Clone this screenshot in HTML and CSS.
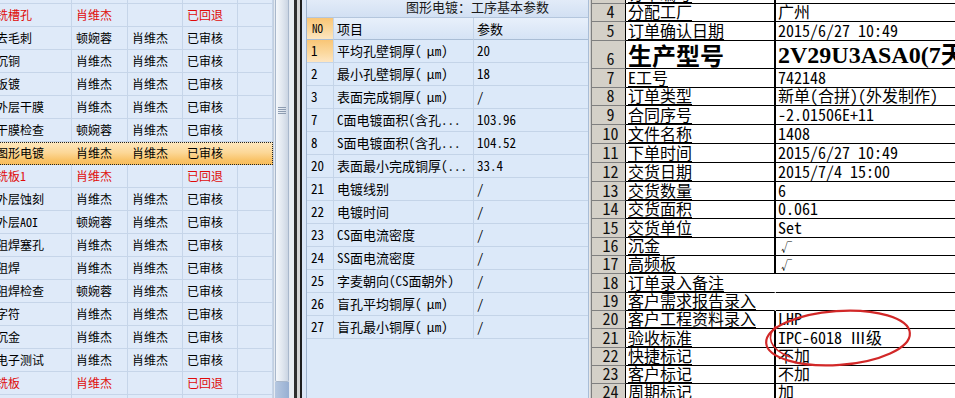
FILE: index.html
```html
<!DOCTYPE html>
<html lang="zh-CN">
<head>
<meta charset="utf-8">
<title>图形电镀</title>
<link rel="stylesheet" href="styles.css">
</head>
<body>
<div class="screen">
  <div class="left">
    <div class="grid-clip">
      <div class="grid">
        <div class="row"><span></span><span></span><span></span><span></span><span></span></div>
        <div class="row red"><span>铣槽孔</span><span>肖维杰</span><span></span><span>已回退</span><span></span></div>
        <div class="row"><span>去毛刺</span><span>顿婉蓉</span><span>肖维杰</span><span>已审核</span><span></span></div>
        <div class="row"><span>沉铜</span><span>肖维杰</span><span>肖维杰</span><span>已审核</span><span></span></div>
        <div class="row"><span>板镀</span><span>肖维杰</span><span>肖维杰</span><span>已审核</span><span></span></div>
        <div class="row"><span>外层干膜</span><span>肖维杰</span><span>肖维杰</span><span>已审核</span><span></span></div>
        <div class="row"><span>干膜检查</span><span>顿婉蓉</span><span>肖维杰</span><span>已审核</span><span></span></div>
        <div class="row sel"><span>图形电镀</span><span>肖维杰</span><span>肖维杰</span><span>已审核</span><span></span></div>
        <div class="row red"><span>铣板1</span><span>肖维杰</span><span></span><span>已回退</span><span></span></div>
        <div class="row"><span>外层蚀刻</span><span>肖维杰</span><span>肖维杰</span><span>已审核</span><span></span></div>
        <div class="row"><span>外层AOI</span><span>顿婉蓉</span><span>肖维杰</span><span>已审核</span><span></span></div>
        <div class="row"><span>阻焊塞孔</span><span>肖维杰</span><span>肖维杰</span><span>已审核</span><span></span></div>
        <div class="row"><span>阻焊</span><span>肖维杰</span><span>肖维杰</span><span>已审核</span><span></span></div>
        <div class="row"><span>阻焊检查</span><span>顿婉蓉</span><span>肖维杰</span><span>已审核</span><span></span></div>
        <div class="row"><span>字符</span><span>肖维杰</span><span>肖维杰</span><span>已审核</span><span></span></div>
        <div class="row"><span>沉金</span><span>肖维杰</span><span>肖维杰</span><span>已审核</span><span></span></div>
        <div class="row"><span>电子测试</span><span>肖维杰</span><span>肖维杰</span><span>已审核</span><span></span></div>
        <div class="row red"><span>铣板</span><span>肖维杰</span><span></span><span>已回退</span><span></span></div>
        <div class="row"><span></span><span></span><span></span><span></span><span></span></div>
      </div>
    </div>
    <div class="vscroll">
      <div class="thumb"><span class="grip"></span></div>
      <div class="track-end"></div>
    </div>
  </div>

  <div class="splitter"><i class="s1"></i><i class="s2"></i><i class="s3"></i><i class="s4"></i><i class="s5"></i></div>

  <div class="mid">
    <div class="title">图形电镀：工序基本参数</div>
    <div class="prow head"><span class="no hl">NO</span><span>项目</span><span>参数</span></div>
    <div class="prow"><span class="no hl">1</span><span>平均孔壁铜厚(<i class="mu">μ</i>m)</span><span>20</span></div>
    <div class="prow"><span class="no">2</span><span>最小孔壁铜厚(<i class="mu">μ</i>m)</span><span>18</span></div>
    <div class="prow"><span class="no">3</span><span>表面完成铜厚(<i class="mu">μ</i>m)</span><span>/</span></div>
    <div class="prow"><span class="no">7</span><span>C面电镀面积(含孔...</span><span>103.96</span></div>
    <div class="prow"><span class="no">8</span><span>S面电镀面积(含孔...</span><span>104.52</span></div>
    <div class="prow"><span class="no">20</span><span>表面最小完成铜厚(...</span><span>33.4</span></div>
    <div class="prow"><span class="no">21</span><span>电镀线别</span><span>/</span></div>
    <div class="prow"><span class="no">22</span><span>电镀时间</span><span>/</span></div>
    <div class="prow"><span class="no">23</span><span>CS面电流密度</span><span>/</span></div>
    <div class="prow"><span class="no">24</span><span>SS面电流密度</span><span>/</span></div>
    <div class="prow"><span class="no">25</span><span>字麦朝向(CS面朝外)</span><span>/</span></div>
    <div class="prow"><span class="no">26</span><span>盲孔平均铜厚(<i class="mu">μ</i>m)</span><span>/</span></div>
    <div class="prow"><span class="no">27</span><span>盲孔最小铜厚(<i class="mu">μ</i>m)</span><span>/</span></div>
  </div>

  <div class="gap"></div>

  <div class="excel">
    <div class="xr h4"><span class="rh">3</span><span class="ca"><u>订单编号</u></span><span class="cb">1</span></div>
    <div class="xr h18"><span class="rh">4</span><span class="ca"><u>分配工厂</u></span><span class="cb">广州</span></div>
    <div class="xr h19"><span class="rh">5</span><span class="ca"><u>订单确认日期</u></span><span class="cb">2015/6/27 10:49</span></div>
    <div class="xr h28"><span class="rh">6</span><span class="ca big">生产型号</span><span class="cb big latin">2V29U3ASA0(7天</span></div>
    <div class="xr h19"><span class="rh">7</span><span class="ca"><u>E工号</u></span><span class="cb">742148</span></div>
    <div class="xr h18"><span class="rh">8</span><span class="ca"><u>订单类型</u></span><span class="cb">新单(合拼)(外发制作)</span></div>
    <div class="xr h19"><span class="rh">9</span><span class="ca"><u>合同序号</u></span><span class="cb">-2.01506E+11</span></div>
    <div class="xr h19"><span class="rh">10</span><span class="ca"><u>文件名称</u></span><span class="cb">1408</span></div>
    <div class="xr h19"><span class="rh">11</span><span class="ca"><u>下单时间</u></span><span class="cb">2015/6/27 10:49</span></div>
    <div class="xr h19"><span class="rh">12</span><span class="ca"><u>交货日期</u></span><span class="cb">2015/7/4 15:00</span></div>
    <div class="xr h19"><span class="rh">13</span><span class="ca"><u>交货数量</u></span><span class="cb">6</span></div>
    <div class="xr h18"><span class="rh">14</span><span class="ca"><u>交货面积</u></span><span class="cb">0.061</span></div>
    <div class="xr h19"><span class="rh">15</span><span class="ca"><u>交货单位</u></span><span class="cb">Set</span></div>
    <div class="xr h18"><span class="rh">16</span><span class="ca"><u>沉金</u></span><span class="cb"><span class="chk">√</span></span></div>
    <div class="xr h18"><span class="rh">17</span><span class="ca"><u>高频板</u></span><span class="cb"><span class="chk">√</span></span></div>
    <div class="xr h19"><span class="rh">18</span><span class="ca m"><u>订单录入备注</u></span><span class="cb"></span></div>
    <div class="xr h18"><span class="rh">19</span><span class="ca m"><u>客户需求报告录入</u></span><span class="cb"></span></div>
    <div class="xr h18"><span class="rh">20</span><span class="ca"><u>客户工程资料录入</u></span><span class="cb">LHP</span></div>
    <div class="xr h19"><span class="rh">21</span><span class="ca"><u>验收标准</u></span><span class="cb">IPC-6018 Ⅲ级</span></div>
    <div class="xr h18"><span class="rh">22</span><span class="ca"><u>快捷标记</u></span><span class="cb">不加</span></div>
    <div class="xr h18"><span class="rh">23</span><span class="ca"><u>客户标记</u></span><span class="cb">不加</span></div>
    <div class="xr h18"><span class="rh">24</span><span class="ca"><u>周期标记</u></span><span class="cb">加</span></div>
  </div>

  <svg class="mark" width="955" height="398" viewBox="0 0 955 398" aria-hidden="true">
    <ellipse cx="838" cy="338" rx="72" ry="27" transform="rotate(-4 838 338)" fill="none" stroke="#d22828" stroke-width="2.2"/>
    <path d="M776 326 C 766 336, 769 349, 790 357" fill="none" stroke="#d22828" stroke-width="1.6"/>
  </svg>
</div>
</body>
</html>
```

FILE: styles.css
```css
* {
  box-sizing: border-box;
  margin: 0;
  padding: 0;
}

html,
body {
  width: 955px;
  height: 398px;
  overflow: hidden;
  background: #ffffff;
}

body {
  font-family: "Noto Sans Mono CJK SC", "Noto Sans CJK SC", sans-serif;
  color: #000;
}

.screen {
  position: relative;
  display: flex;
  width: 955px;
  height: 398px;
  overflow: hidden;
}

/* ---------- left process list ---------- */
.left {
  display: flex;
  flex: none;
  width: 290px;
  height: 100%;
}

.grid-clip {
  width: 273px;
  height: 100%;
  overflow: hidden;
  background: #dfeaf9;
}

.grid {
  width: 277px;
  margin-left: -4px;
  margin-top: -19px;
  font-size: 12px;
}

.row {
  display: grid;
  grid-template-columns: 76px 56px 55px 55px 35px;
  height: 23px;
}

.row > span {
  border-right: 1px solid #c6d5e9;
  border-bottom: 1px solid #c6d5e9;
  padding-left: 4px;
  line-height: 22px;
  white-space: nowrap;
  overflow: hidden;
}

.row > span:first-child {
  padding-left: 0;
}

.row.red > span {
  color: #e00a0a;
}

.row.sel {
  background: linear-gradient(#fee8c0, #fcd898 45%, #f9c266 80%, #f8bd5c);
  outline: 1px dotted #222;
  outline-offset: -1px;
}

.row.sel > span {
  border-color: transparent;
}

.vscroll {
  display: flex;
  flex-direction: column;
  width: 17px;
  height: 100%;
  background: #e4eaf2;
  border-left: 1px solid #c3cfdf;
}

.thumb {
  display: flex;
  justify-content: center;
  height: 382px;
  margin: 0 1px;
  border: 1px solid #a9b8cc;
  border-top: none;
  border-radius: 0 0 2px 2px;
  background: linear-gradient(to right, #f4f7fb, #e2e8f0 50%, #cbd5e3);
}

.grip {
  width: 8px;
  height: 7px;
  margin-top: 107px;
  background: repeating-linear-gradient(#8d9cb1 0 1px, transparent 1px 2px);
}

.track-end {
  flex: 1;
  margin: 0 1px;
  background: linear-gradient(to right, #b6c8e1, #97afd2);
}

/* ---------- splitter ---------- */
.splitter {
  display: flex;
  flex: none;
  width: 16px;
  height: 100%;
}

.splitter i {
  display: block;
  height: 100%;
}

.s1 { width: 4px; background: #e9edf2; }
.s2 { width: 3px; background: #2e2e2e; }
.s3 { width: 3px; background: #d4d4d4; }
.s4 { width: 2px; background: #1e1e1e; }
.s5 { width: 4px; background: #dbe7f7; }

/* ---------- middle parameter grid ---------- */
.mid {
  flex: none;
  width: 283px;
  height: 100%;
  background: #dce9f9;
  border-left: 1px solid #9fb3cd;
  border-right: 1px solid #a9bdd6;
  font-size: 13px;
}

.title {
  height: 18px;
  padding-left: 99px;
  line-height: 14px;
  color: #1a1a1a;
  background: linear-gradient(#e2ebf8, #d2e0f3);
  border-bottom: 1px solid #b4c6dd;
  white-space: nowrap;
}

.prow {
  display: grid;
  grid-template-columns: 27px 140px 1fr;
  height: 23px;
}

.prow > span {
  padding-left: 3px;
  line-height: 22px;
  white-space: nowrap;
  overflow: hidden;
  border-bottom: 1px solid #c4d4e8;
  border-right: 1px solid #c4d4e8;
}

.prow > span:last-child {
  border-right: none;
}

.prow > span.no {
  padding-left: 4px;
}

.mu {
  font-style: normal;
  padding-left: 5px;
}

.prow.head {
  height: 22px;
}

.prow.head > span {
  line-height: 21px;
  background: linear-gradient(#e8f0fb, #d5e3f5);
  border-bottom-color: #a9bdd5;
}

.prow.head > span.no {
  font-size: 11px;
  padding-left: 5px;
}

.prow > span.hl,
.prow.head > span.hl {
  background: linear-gradient(#f9c676, #fbd9a0 60%, #fde6c2);
}

/* ---------- gap between panels ---------- */
.gap {
  flex: none;
  width: 3px;
  height: 100%;
  background: linear-gradient(to right, #e6e6e6 0 1px, #cdcdcd 1px 2px, #7f7f7f 2px 3px);
}

/* ---------- excel sheet ---------- */
.excel {
  flex: 1;
  height: 100%;
  overflow: hidden;
  background: #ffffff;
  font-size: 16px;
}

.xr {
  display: flex;
}

.xr.h4 { height: 4px; }
.xr.h18 { height: 18px; }
.xr.h19 { height: 19px; }
.xr.h28 { height: 28px; }

.xr > span {
  display: flex;
  align-items: flex-end;
  line-height: 16px;
  padding-bottom: 2px;
  white-space: nowrap;
  overflow: hidden;
}

.rh {
  flex: none;
  width: 34px;
  justify-content: center;
  padding-left: 4px;
  background: #d4d0c8;
  color: #111;
  border-right: 1px solid #000;
  border-bottom: 1px solid #808080;
}

.ca {
  flex: none;
  width: 150px;
  padding-left: 2px;
  border-right: 2px solid #000;
  border-bottom: 1px solid #000;
}

.ca.m {
  border-right-color: transparent;
  overflow: visible;
}

.ca u {
  text-decoration: underline;
  text-decoration-thickness: 1px;
  text-underline-offset: 2px;
}

.cb {
  flex: 1;
  padding-left: 2px;
  border-bottom: 1px solid #000;
}

.xr > span.big {
  font-size: 24px;
  font-weight: 700;
  line-height: 24px;
  padding-bottom: 1px;
}

.xr > span.latin {
  font-family: "Liberation Serif", "Noto Sans CJK SC", serif;
}

.chk {
  font-size: 11px;
  line-height: 12px;
  padding-left: 3px;
}

/* ---------- red hand-drawn mark ---------- */
.mark {
  position: absolute;
  left: 0;
  top: 0;
  pointer-events: none;
}
```
